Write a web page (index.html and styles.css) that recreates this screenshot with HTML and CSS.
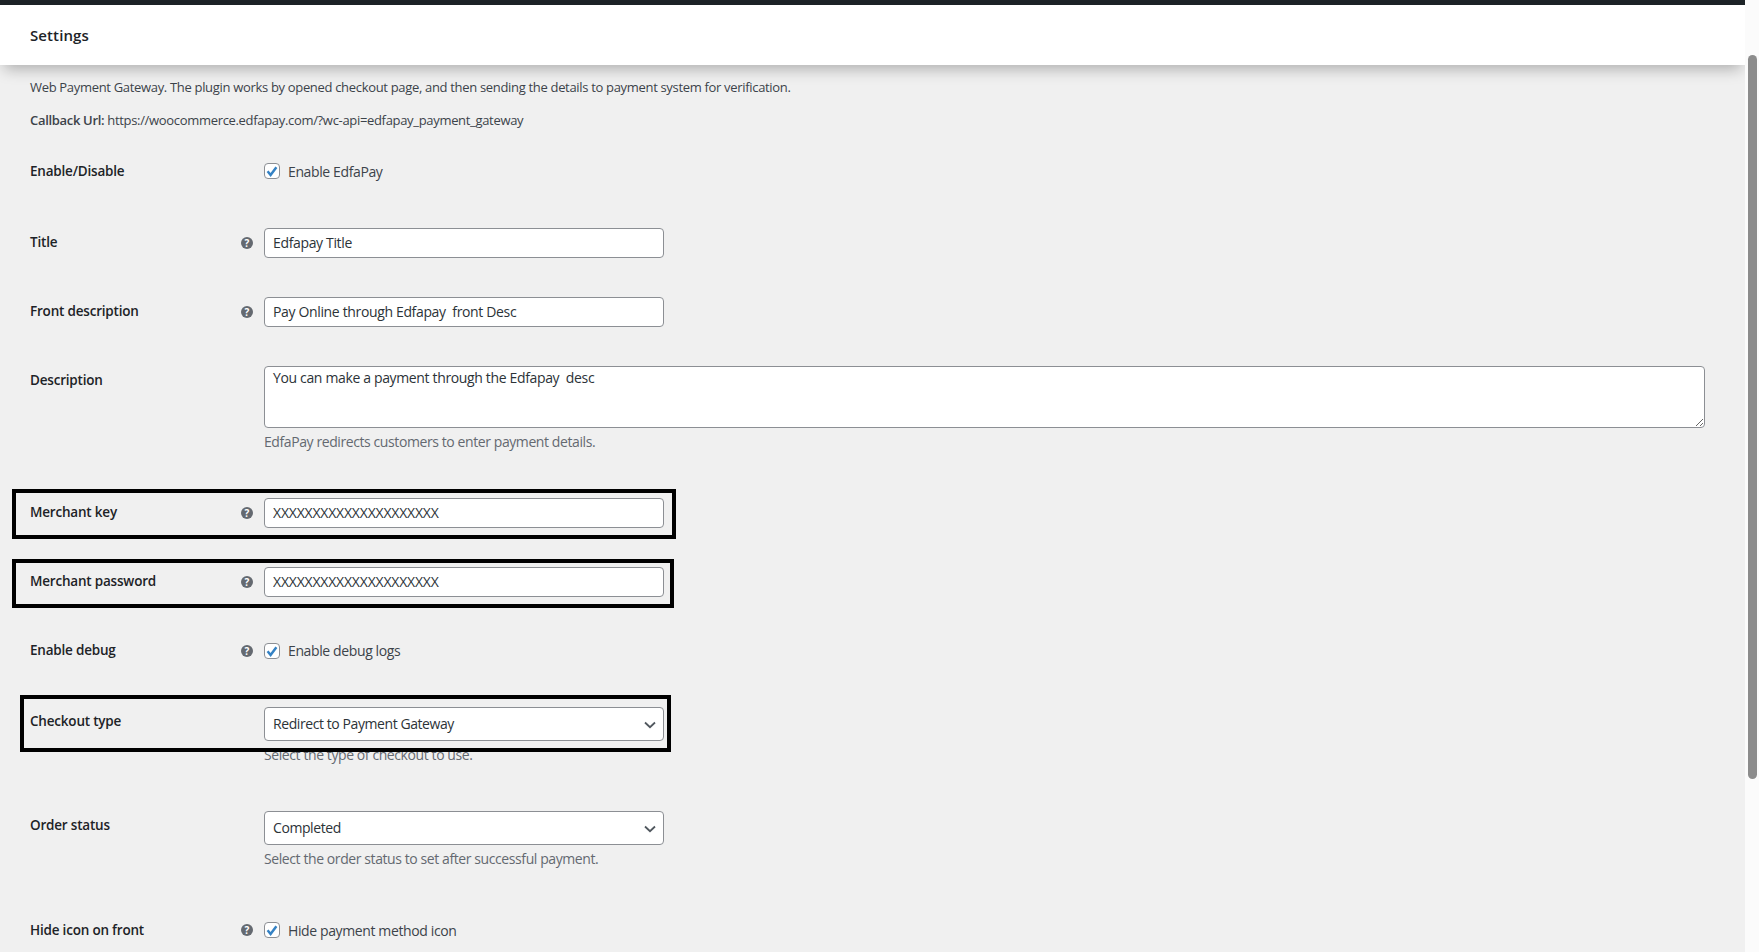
FILE: index.html
```html
<!DOCTYPE html>
<html lang="en">
<head>
<meta charset="utf-8">
<title>Settings</title>
<link rel="stylesheet" href="styles.css">
</head>
<body>
<div class="app">
  <div class="page">
    <div class="adminbar"></div>
    <header class="header"><h1 class="header-title">Settings</h1></header>
    <main class="main">
      <p class="intro">Web Payment Gateway. The plugin works by opened checkout page, and then sending the details to payment system for verification.</p>
      <p class="intro intro-last"><strong class="strong">Callback Url:</strong> https://woocommerce.edfapay.com/?wc-api=edfapay_payment_gateway</p>

      <div class="row row-low">
        <div class="label">Enable/Disable</div><div class="help-cell"></div>
        <div class="field check-field"><label class="check"><span class="box"><input class="checkbox" type="checkbox" checked><svg class="tick" viewBox="0 0 16 16"><path d="M3.6 8.2 6.6 12 12.4 4.2"/></svg></span><span class="check-text">Enable EdfaPay</span></label></div>
      </div>
      <div class="row">
        <div class="label">Title</div><div class="help-cell"><span class="help"></span></div>
        <div class="field"><input class="input" type="text" value="Edfapay Title"></div>
      </div>
      <div class="row">
        <div class="label">Front description</div><div class="help-cell"><span class="help"></span></div>
        <div class="field"><input class="input" type="text" value="Pay Online through Edfapay  front Desc"></div>
      </div>
      <div class="row">
        <div class="label">Description</div><div class="help-cell"></div>
        <div class="field">
          <textarea class="textarea">You can make a payment through the Edfapay  desc</textarea>
          <p class="note">EdfaPay redirects customers to enter payment details.</p>
        </div>
      </div>
      <div class="row">
        <div class="label">Merchant key</div><div class="help-cell"><span class="help"></span></div>
        <div class="field"><input class="input input-secret" type="text" value="XXXXXXXXXXXXXXXXXXXXX"></div>
      </div>
      <div class="row">
        <div class="label">Merchant password</div><div class="help-cell"><span class="help"></span></div>
        <div class="field"><input class="input input-secret" type="text" value="XXXXXXXXXXXXXXXXXXXXX"></div>
      </div>
      <div class="row">
        <div class="label">Enable debug</div><div class="help-cell"><span class="help"></span></div>
        <div class="field check-field check-field-short"><label class="check"><span class="box"><input class="checkbox" type="checkbox" checked><svg class="tick" viewBox="0 0 16 16"><path d="M3.6 8.2 6.6 12 12.4 4.2"/></svg></span><span class="check-text">Enable debug logs</span></label></div>
      </div>
      <div class="row">
        <div class="label">Checkout type</div><div class="help-cell"></div>
        <div class="field">
          <div class="select-wrap"><select class="select"><option>Redirect to Payment Gateway</option></select><svg class="chevron" viewBox="0 0 12 8"><path d="M1 1.5 6 6.2 11 1.5"/></svg></div>
          <p class="note">Select the type of checkout to use.</p>
        </div>
      </div>
      <div class="row">
        <div class="label">Order status</div><div class="help-cell"></div>
        <div class="field">
          <div class="select-wrap"><select class="select"><option>Completed</option></select><svg class="chevron" viewBox="0 0 12 8"><path d="M1 1.5 6 6.2 11 1.5"/></svg></div>
          <p class="note">Select the order status to set after successful payment.</p>
        </div>
      </div>
      <div class="row row-low">
        <div class="label">Hide icon on front</div><div class="help-cell"><span class="help"></span></div>
        <div class="field check-field"><label class="check"><span class="box"><input class="checkbox" type="checkbox" checked><svg class="tick" viewBox="0 0 16 16"><path d="M3.6 8.2 6.6 12 12.4 4.2"/></svg></span><span class="check-text">Hide payment method icon</span></label></div>
      </div>
    </main>
    <div class="mark mark-key"></div>
    <div class="mark mark-password"></div>
    <div class="mark mark-checkout"></div>
  </div>
  <div class="scrollbar"><div class="thumb"></div></div>
</div>
</body>
</html>
```
FILE: styles.css
```css
* { box-sizing: border-box; }
html, body { margin: 0; height: 100%; overflow: hidden; }
body {
  font-family: "Open Sans", "Noto Sans", "Liberation Sans", sans-serif;
  font-size: 13px;
  line-height: 20px;
  color: #3c434a;
  background: #f0f0f0;
}
.app { display: flex; height: 952px; overflow: hidden; }
.page { position: relative; flex: 1; min-width: 0; background: #f0f0f0; overflow: hidden; }
.adminbar { height: 5px; background: #1d2327; }
.header {
  position: relative;
  z-index: 2;
  height: 60px;
  padding-left: 30px;
  display: flex;
  align-items: center;
  background: #fff;
  box-shadow: 0 8px 14px -4px rgba(0, 0, 0, .28);
}
.header-title { margin: 0; font-size: 15px; font-weight: 600; letter-spacing: .1px; color: #1d2327; }
.main { padding: 12px 40px 0 30px; }
.intro { margin: 0 0 13px; font-size: 13px; letter-spacing: -.32px; }
.intro-last { margin-bottom: 7px; }
.strong { font-weight: 600; }
.row { display: grid; grid-template-columns: 200px 34px 1fr; padding: 19px 0 20px; }
.label { padding-top: 4px; font-size: 13.5px; font-weight: 600; letter-spacing: -.2px; color: #1d2327; }
.row-low .label { padding-top: 5px; }
.help-cell { padding-top: 9px; }
.help {
  display: block;
  width: 12px;
  height: 12px;
  margin-left: 11px;
  border-radius: 50%;
  background: #646970;
  color: #fff;
  font-size: 10px;
  font-weight: 700;
  line-height: 12px;
  text-align: center;
}
.help::after { content: "?"; }
.field { min-width: 0; }
.check-field { padding: 7px 0 10px; }
.check-field-short { padding-bottom: 9px; }
.check { display: flex; align-items: center; height: 16px; font-size: 14px; letter-spacing: -.38px; }
.row-low .check-text { margin-top: 2px; }
.box { position: relative; width: 16px; height: 16px; margin-right: 8px; }
.checkbox {
  appearance: none;
  display: block;
  width: 16px;
  height: 16px;
  margin: 0;
  background: #fff;
  border: 1px solid #8c8f94;
  border-radius: 4px;
}
.tick { position: absolute; inset: 0; width: 16px; height: 16px; fill: none; stroke: #3582c4; stroke-width: 2.5; }
.input, .textarea, .select {
  display: block;
  font: inherit;
  font-size: 14px;
  letter-spacing: -.35px;
  color: #2c3338;
  background: #fff;
  border: 1px solid #8c8f94;
  border-radius: 4px;
  outline: 0;
}
.input { width: 400px; height: 30px; padding: 0 8px 2px; }
.input-secret { letter-spacing: -.2px; }
.textarea { width: 100%; height: 62px; padding: 1px 8px; resize: vertical; }
.select-wrap { position: relative; width: 400px; }
.select { appearance: none; width: 100%; height: 34px; padding: 0 24px 0 8px; letter-spacing: -.42px; }
.chevron { position: absolute; right: 8px; top: 14px; width: 12px; height: 8px; fill: none; stroke: #50575e; stroke-width: 1.8; }
.note { margin: 4px 0 7px; font-size: 14px; letter-spacing: -.41px; color: #646970; }
.mark { position: absolute; z-index: 3; border: 4px solid #000; }
.mark-key { left: 12px; top: 489px; width: 664px; height: 50px; }
.mark-password { left: 12px; top: 559px; width: 662px; height: 49px; }
.mark-checkout { left: 20px; top: 695px; width: 651px; height: 57px; }
.scrollbar { flex: 0 0 14px; padding: 55px 2px 0 3px; background: #fbfbfb; }
.thumb { height: 724px; border-radius: 5px; background: #8c8c8c; }
```
